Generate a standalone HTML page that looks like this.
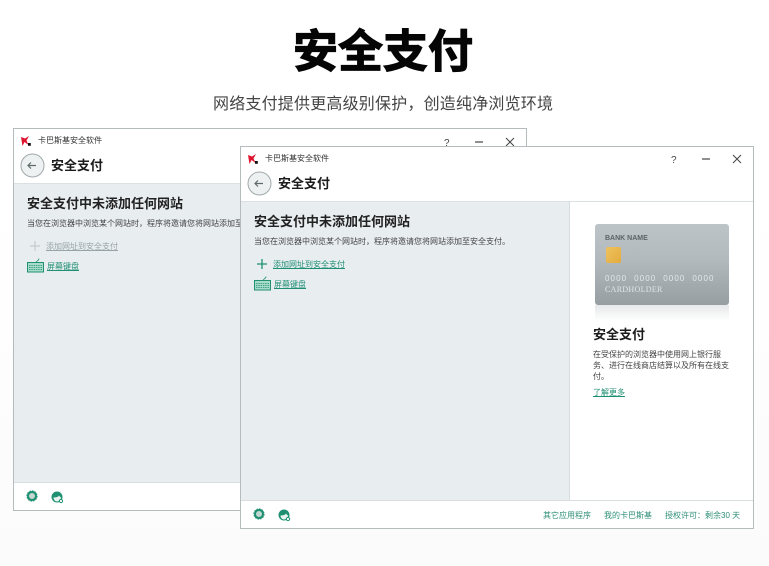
<!DOCTYPE html>
<html lang="zh">
<head>
<meta charset="utf-8">
<style>
html,body{margin:0;padding:0}
body{width:769px;height:566px;overflow:hidden;position:relative;background:linear-gradient(#fff 0,#fff 200px,#fbfbfb 566px);font-family:"Liberation Sans","Noto Sans CJK SC",sans-serif}
.a{position:absolute;white-space:nowrap}
.title{left:293px;top:19px;font-size:45px;line-height:65px;font-weight:700;color:#050505;-webkit-text-stroke:1.2px #050505}
.sub{left:213px;top:93px;font-size:16px;line-height:23px;letter-spacing:.2px;color:#444}
.win{position:absolute;width:512px;height:381px;background:#fff;border:1px solid #b5bcbe;overflow:hidden}
.win .in{position:absolute;left:0;top:0;width:512px;height:381px;filter:blur(.3px)}
.pane{position:absolute;left:0;top:54px;width:512px;height:300px;background:#e8edf0;border-top:1px solid #dbe0e2;border-bottom:1px solid #d8dddf;box-sizing:border-box}
.app{left:24px;top:6px;font-size:8px;line-height:12px;color:#333}
.h1{left:37px;top:28px;font-size:13px;line-height:18px;font-weight:700;color:#1c1c1c}
.h2{left:13px;top:66px;font-size:13px;line-height:18px;font-weight:700;color:#222}
.p{left:13px;top:89px;font-size:8px;line-height:12px;color:#444}
.lnk{font-size:8px;line-height:12px;color:#1f8f74;text-decoration:underline}
.foot{font-size:8px;line-height:12px;color:#2f8f78}
.side{position:absolute;left:328px;top:54px;width:184px;height:300px;background:#fff;border-left:1px solid #d8dddf;border-top:1px solid #dbe0e2;border-bottom:1px solid #d8dddf;box-sizing:border-box}
svg{position:absolute;display:block}
.card{position:absolute;left:354px;top:77px;width:134px;height:81px;border-radius:3px;background:linear-gradient(#bdc4c8,#b2b9bd 45%,#969ea2)}
.refl{position:absolute;left:354px;top:158px;width:134px;height:16px;background:linear-gradient(#e6e8e9,#fff)}
.chip{position:absolute;left:11px;top:23px;width:15px;height:16px;border-radius:2px;background:linear-gradient(135deg,#efc25e,#e3ab3e)}
.cb{position:absolute;left:10px;top:10px;font-size:7px;line-height:10px;color:#5b6468;font-weight:700}
.cn{position:absolute;left:10px;top:50px;font-size:8px;line-height:10px;letter-spacing:1.1px;color:#e3e6e8;word-spacing:3.6px}
.ch{position:absolute;left:10px;top:61px;font-family:"Liberation Serif",serif;font-size:8px;line-height:10px;letter-spacing:.3px;color:#e3e6e8}
.sh{left:352px;top:179px;font-size:13px;line-height:18px;font-weight:700;color:#1c1c1c}
.sp{left:352px;top:202px;width:140px;font-size:8px;line-height:11px;color:#444;white-space:normal}
</style>
</head>
<body>
<div class="a title">安全支付</div>
<div class="a sub">网络支付提供更高级别保护，创造纯净浏览环境</div>

<div class="win" style="left:13px;top:128px">
<div class="in">
<svg style="left:7px;top:7px" width="10" height="10" viewBox="0 0 10 10"><path d="M0 1L4 2.500 8 0 5.500 4.500 7.500 9 3.500 6 1.500 10z" fill="#e0142f"/><rect x="7" y="7" width="2.800" height="2.800" fill="#111"/></svg>
<div class="a app">卡巴斯基安全软件</div>
<svg style="left:429px;top:6px" width="72" height="14" viewBox="0 0 72 14" fill="none" stroke="#444"><text x="1" y="11" font-size="10" fill="#444" stroke="none" font-family="Liberation Sans">?</text><path d="M32 7h8" stroke-width="1.200"/><path d="M63 3l8 8M71 3l-8 8" stroke-width="1"/></svg>
<svg style="left:6px;top:24px" width="25" height="25" viewBox="0 0 25 25"><circle cx="12.500" cy="12.500" r="11.500" fill="#eef1f2" stroke="#a0a8aa"/><path d="M8 12.500h8M11 9.500l-3 3 3 3" fill="none" stroke="#5d6a6c" stroke-width="1.200"/></svg>
<div class="a h1">安全支付</div>
<div class="pane"></div>
<div class="a h2">安全支付中未添加任何网站</div>
<div class="a p">当您在浏览器中浏览某个网站时，程序将邀请您将网站添加至安全支付。</div>
<svg style="left:16px;top:112px" width="10" height="10" viewBox="0 0 10 10"><path d="M5 0v10M0 5h10" stroke="#c5cbcd" stroke-width="1.200"/></svg>
<div class="a lnk" style="left:32px;top:112px;color:#98a3a6">添加网址到安全支付</div>
<svg style="left:13px;top:129px" width="18" height="15" viewBox="0 0 18 15"><path d="M9 4.500C9 3 12 3 12 .5" fill="none" stroke="#1f9172" stroke-width=".8"/><rect x=".5" y="4.500" width="16" height="9.500" fill="#a8dbc9" stroke="#1f9172"/><path d="M2 7.500h13M2 9.500h13M2 11.500h13" stroke="#1f9172" stroke-width=".8" stroke-dasharray="1.500 .8"/></svg>
<div class="a lnk" style="left:33px;top:132px">屏幕键盘</div>
<svg style="left:12px;top:361px" width="12" height="12" viewBox="0 0 12 12"><circle cx="6" cy="6" r="5.400" fill="#c3d8d1"/><circle cx="6" cy="6" r="4" fill="none" stroke="#1f9172" stroke-width="2"/><circle cx="6" cy="6" r="5" fill="none" stroke="#1f9172" stroke-width="1.200" stroke-dasharray="1.500 1.100"/></svg>
<svg style="left:37px;top:362px" width="13" height="13" viewBox="0 0 13 13"><circle cx="6" cy="6" r="5.500" fill="#1f9172"/><path d="M2.500 6.500c2 0 5-.5 5.500-2 .5 1 1.500 1.500 2 2 0 2-2 4-4 4s-3.500-2-3.500-4z" fill="#e8f3ef"/><circle cx="10" cy="10" r="1.600" fill="#fff" stroke="#1f9172"/></svg>
</div>
</div>

<div class="win" style="left:240px;top:146px">
<div class="in">
<svg style="left:7px;top:7px" width="10" height="10" viewBox="0 0 10 10"><path d="M0 1L4 2.500 8 0 5.500 4.500 7.500 9 3.500 6 1.500 10z" fill="#e0142f"/><rect x="7" y="7" width="2.800" height="2.800" fill="#111"/></svg>
<div class="a app">卡巴斯基安全软件</div>
<svg style="left:429px;top:5px" width="72" height="14" viewBox="0 0 72 14" fill="none" stroke="#444"><text x="1" y="11" font-size="10" fill="#444" stroke="none" font-family="Liberation Sans">?</text><path d="M32 7h8" stroke-width="1.200"/><path d="M63 3l8 8M71 3l-8 8" stroke-width="1"/></svg>
<svg style="left:6px;top:24px" width="25" height="25" viewBox="0 0 25 25"><circle cx="12.500" cy="12.500" r="11.500" fill="#eef1f2" stroke="#a0a8aa"/><path d="M8 12.500h8M11 9.500l-3 3 3 3" fill="none" stroke="#5d6a6c" stroke-width="1.200"/></svg>
<div class="a h1">安全支付</div>
<div class="pane"></div>
<div class="side"></div>
<div class="a h2">安全支付中未添加任何网站</div>
<div class="a p">当您在浏览器中浏览某个网站时，程序将邀请您将网站添加至安全支付。</div>
<svg style="left:16px;top:112px" width="10" height="10" viewBox="0 0 10 10"><path d="M5 0v10M0 5h10" stroke="#1f9172" stroke-width="1.300"/></svg>
<div class="a lnk" style="left:32px;top:112px">添加网址到安全支付</div>
<svg style="left:13px;top:129px" width="18" height="15" viewBox="0 0 18 15"><path d="M9 4.500C9 3 12 3 12 .5" fill="none" stroke="#1f9172" stroke-width=".8"/><rect x=".5" y="4.500" width="16" height="9.500" fill="#a8dbc9" stroke="#1f9172"/><path d="M2 7.500h13M2 9.500h13M2 11.500h13" stroke="#1f9172" stroke-width=".8" stroke-dasharray="1.500 .8"/></svg>
<div class="a lnk" style="left:33px;top:132px">屏幕键盘</div>
<div class="card">
<div class="cb">BANK NAME</div><div class="chip"></div>
<div class="cn">0000 0000 0000 0000</div><div class="ch">CARDHOLDER</div>
</div>
<div class="refl"></div>
<div class="a sh">安全支付</div>
<div class="a sp">在受保护的浏览器中使用网上银行服务、进行在线商店结算以及所有在线支付。</div>
<div class="a lnk" style="left:352px;top:240px">了解更多</div>
<svg style="left:12px;top:361px" width="12" height="12" viewBox="0 0 12 12"><circle cx="6" cy="6" r="5.400" fill="#c3d8d1"/><circle cx="6" cy="6" r="4" fill="none" stroke="#1f9172" stroke-width="2"/><circle cx="6" cy="6" r="5" fill="none" stroke="#1f9172" stroke-width="1.200" stroke-dasharray="1.500 1.100"/></svg>
<svg style="left:37px;top:362px" width="13" height="13" viewBox="0 0 13 13"><circle cx="6" cy="6" r="5.500" fill="#1f9172"/><path d="M2.500 6.500c2 0 5-.5 5.500-2 .5 1 1.500 1.500 2 2 0 2-2 4-4 4s-3.500-2-3.500-4z" fill="#e8f3ef"/><circle cx="10" cy="10" r="1.600" fill="#fff" stroke="#1f9172"/></svg>
<div class="a foot" style="left:302px;top:363px">其它应用程序</div>
<div class="a foot" style="left:363px;top:363px">我的卡巴斯基</div>
<div class="a foot" style="left:424px;top:363px">授权许可：剩余30 天</div>
</div>
</div>
</body>
</html>
